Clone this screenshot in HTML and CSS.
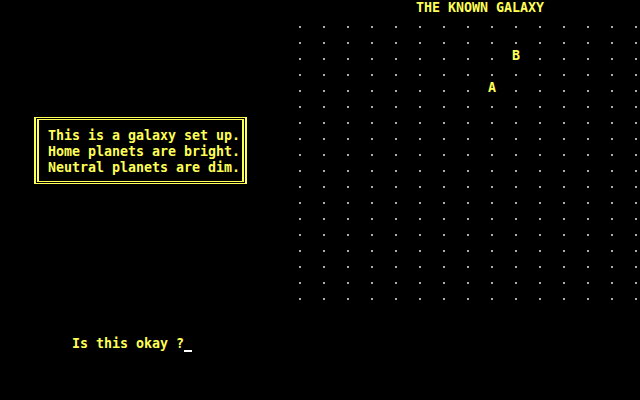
FILE: index.html
```html
<!DOCTYPE html>
<html>
<head>
<meta charset="utf-8">
<link rel="stylesheet" href="styles.css">
</head>
<body>
<main class="screen">
  <div class="title">THE KNOWN GALAXY</div>
  <div class="map">
    <svg class="dots" width="344" height="288" viewBox="0 0 344 288" shape-rendering="crispEdges">
      <defs>
        <pattern id="dot" width="24" height="16" patternUnits="userSpaceOnUse">
          <rect x="3" y="10" width="2" height="2" fill="#aaaaaa"/>
        </pattern>
      </defs>
      <rect x="0" y="0" width="344" height="288" fill="url(#dot)"/>
    </svg>
    <span class="planet planet-a">A</span>
    <span class="planet planet-b">B</span>
  </div>
  <div class="box">
    <div class="box-inner">
      <div class="line">This is a galaxy set up.</div>
      <div class="line">Home planets are bright.</div>
      <div class="line">Neutral planets are dim.</div>
    </div>
  </div>
  <div class="prompt">Is this okay ?<span class="cursor"></span></div>
</main>
</body>
</html>
```
FILE: styles.css
```css
html, body {
  margin: 0;
  padding: 0;
  background: #000;
}
.screen {
  width: 640px;
  height: 400px;
  background: #000;
  color: #ffff55;
  font-family: "DejaVu Sans Mono", "Liberation Mono", monospace;
  font-weight: bold;
  font-size: 13.3px;
  line-height: 16px;
  display: grid;
  grid-template-columns: repeat(80, 8px);
  grid-template-rows: repeat(25, 16px);
  overflow: hidden;
}
.title {
  grid-row: 1;
  grid-column: 53 / span 16;
  white-space: pre;
}
.map {
  grid-row: 2 / span 18;
  grid-column: 38 / span 43;
  display: grid;
  grid-template-columns: repeat(15, 24px);
  grid-template-rows: repeat(18, 16px);
}
.dots {
  grid-row: 1 / -1;
  grid-column: 1 / -1;
  display: block;
}
.planet {
  width: 8px;
  height: 16px;
  background: #000;
  justify-self: start;
  white-space: pre;
}
.planet-a {
  grid-row: 5;
  grid-column: 9;
}
.planet-b {
  grid-row: 3;
  grid-column: 10;
}
.box {
  grid-row: 8 / span 5;
  grid-column: 5 / span 27;
  margin: 5px 1px 8px 2px;
  border-style: solid;
  border-color: #ffff55;
  border-width: 1px 2px;
  padding: 1px;
  display: flex;
}
.box-inner {
  flex: 1;
  border-style: solid;
  border-color: #ffff55;
  border-width: 1px 2px;
  padding: 8px 2px 5px 9px;
}
.line {
  height: 16px;
  white-space: pre;
}
.prompt {
  grid-row: 22;
  grid-column: 10 / span 15;
  white-space: pre;
  display: flex;
}
.cursor {
  width: 8px;
  height: 2px;
  margin-top: 14px;
  background: #ffffff;
}
```
